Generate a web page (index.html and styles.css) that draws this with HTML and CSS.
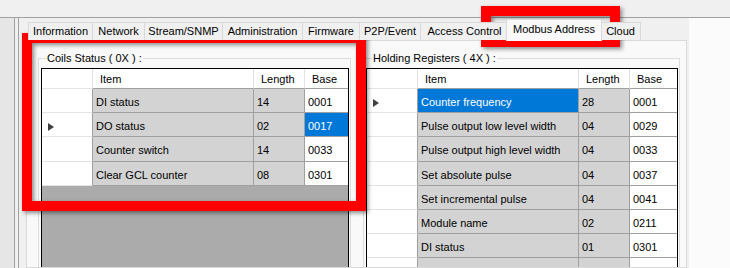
FILE: index.html
```html
<!DOCTYPE html>
<html>
<head>
<meta charset="utf-8">
<link rel="stylesheet" href="styles.css">
</head>
<body>
<div class="topbar"></div>
<div class="main">
  <div class="side"></div>
  <div class="gap"></div>
  <div class="tabctl">
    <div class="tabs">
      <div class="tab w-info">Information</div>
      <div class="tab w-net">Network</div>
      <div class="tab w-snmp">Stream/SNMP</div>
      <div class="tab w-admin">Administration</div>
      <div class="tab w-fw">Firmware</div>
      <div class="tab w-p2p">P2P/Event</div>
      <div class="tab w-acc">Access Control</div>
      <div class="tab sel w-mod">Modbus Address</div>
      <div class="tab last w-cloud">Cloud</div>
    </div>
    <div class="page">
      <fieldset class="group g-left">
        <legend class="lg-left">Coils Status ( 0X ) :</legend>
        <div class="grid grid-left">
          <div class="row head">
            <div class="c rh"></div><div class="c item">Item</div><div class="c len">Length</div><div class="c base">Base</div>
          </div>
          <div class="row">
            <div class="c rh"></div><div class="c item">DI status</div><div class="c len">14</div><div class="c base">0001</div>
          </div>
          <div class="row">
            <div class="c rh"><span class="arrow"></span></div><div class="c item">DO status</div><div class="c len">02</div><div class="c base selcell">0017</div>
          </div>
          <div class="row">
            <div class="c rh"></div><div class="c item">Counter switch</div><div class="c len">14</div><div class="c base">0033</div>
          </div>
          <div class="row">
            <div class="c rh"></div><div class="c item">Clear GCL counter</div><div class="c len">08</div><div class="c base">0301</div>
          </div>
        </div>
      </fieldset>
      <fieldset class="group g-right">
        <legend class="lg-right">Holding Registers ( 4X ) :</legend>
        <div class="grid grid-right">
          <div class="row head">
            <div class="c rh"></div><div class="c item">Item</div><div class="c len">Length</div><div class="c base">Base</div>
          </div>
          <div class="row">
            <div class="c rh"><span class="arrow"></span></div><div class="c item selcell">Counter frequency</div><div class="c len">28</div><div class="c base">0001</div>
          </div>
          <div class="row">
            <div class="c rh"></div><div class="c item">Pulse output low level width</div><div class="c len">04</div><div class="c base">0029</div>
          </div>
          <div class="row">
            <div class="c rh"></div><div class="c item">Pulse output high level width</div><div class="c len">04</div><div class="c base">0033</div>
          </div>
          <div class="row">
            <div class="c rh"></div><div class="c item">Set absolute pulse</div><div class="c len">04</div><div class="c base">0037</div>
          </div>
          <div class="row">
            <div class="c rh"></div><div class="c item">Set incremental pulse</div><div class="c len">04</div><div class="c base">0041</div>
          </div>
          <div class="row">
            <div class="c rh"></div><div class="c item">Module name</div><div class="c len">02</div><div class="c base">0211</div>
          </div>
          <div class="row">
            <div class="c rh"></div><div class="c item">DI status</div><div class="c len">01</div><div class="c base">0301</div>
          </div>
          <div class="row">
            <div class="c rh"></div><div class="c item">DO status</div><div class="c len">01</div><div class="c base">0302</div>
          </div>
        </div>
      </fieldset>
    </div>
  </div>
  <div class="rest"></div>
</div>
<div class="mark m1"></div>
<div class="mark m2"></div>
</body>
</html>
```
FILE: styles.css
```css
html, body {
  margin: 0;
  height: 268px;
  overflow: hidden;
}
body {
  position: relative;
  background: #f0f0f0;
  font: 11px "Liberation Sans", Arial, sans-serif;
  color: #000;
}
.topbar {
  height: 17px;
}
.main {
  display: flex;
  border-top: 1px solid #a0a0a0;
  height: 250px;
}
.side {
  width: 14px;
  background: #e6e6e6;
  border-right: 1px solid #a0a0a0;
}
.gap {
  width: 3px;
}
.tabctl {
  box-sizing: border-box;
  width: 671px;
  border-left: 1px solid #a0a0a0;
  padding: 0 2px 0 7px;
  display: flex;
  flex-direction: column;
}
.rest {
  flex: 1;
  background: #fbfbfb;
}
.tabs {
  height: 22px;
  display: flex;
  align-items: flex-end;
  padding-left: 2px;
  position: relative;
  z-index: 1;
}
.tab {
  box-sizing: border-box;
  height: 18px;
  line-height: 17px;
  text-align: center;
  white-space: nowrap;
  border-top: 1px solid #d9d9d9;
  border-left: 1px solid #d9d9d9;
  background: #f0f0f0;
}
.tab.last {
  border-right: 1px solid #d9d9d9;
}
.tab.sel {
  position: relative;
  z-index: 2;
  height: 22px;
  line-height: 18px;
  margin: 0 -2px -1px -2px;
  border-right: 1px solid #d9d9d9;
  background: #f9f9f9;
}
.w-info { width: 64px; }
.w-net { width: 52px; }
.w-snmp { width: 78px; }
.w-admin { width: 80px; }
.w-fw { width: 57px; }
.w-p2p { width: 61px; }
.w-acc { width: 88px; }
.w-mod { width: 96px; }
.w-cloud { width: 41px; }

.page {
  flex: 1;
  min-height: 0;
  border: 1px solid #d9d9d9;
  background: #f9f9f9;
  display: flex;
  align-items: flex-start;
  overflow: hidden;
}
.group {
  box-sizing: border-box;
  margin: 11px 0 0 0;
  padding: 3px 1px 0 2px;
  border: 1px solid #dcdcdc;
  min-width: 0;
}
.group legend {
  padding: 0 1px;
  line-height: 13px;
  height: 13px;
}
.g-left {
  width: 313px;
  margin-left: 11px;
}
.g-right {
  width: 317px;
  margin-left: 12px;
}
.lg-left { margin-left: 5px; }
.lg-right { margin-left: 6px; }

.grid {
  box-sizing: border-box;
  border: 1px solid #000;
  background: #ababab;
  height: 230px;
}
.grid-left { width: 308px; }
.grid-right { width: 312px; }
.row {
  display: flex;
  height: 24.2px;
}
.row.head {
  height: 20px;
}
.c {
  box-sizing: border-box;
  border-right: 1px solid #a0a0a0;
  border-bottom: 1px solid #a0a0a0;
  padding: 1px 0 0 3px;
  line-height: 24px;
  white-space: nowrap;
}
.rh {
  width: 51px;
  background: #fff;
  border-bottom-color: #e3e3e3;
  padding: 0;
}
.item {
  width: 161px;
  background: #d3d3d3;
}
.len {
  width: 51px;
  background: #d3d3d3;
}
.base {
  background: #fff;
  border-right: 0;
}
.grid-left .base { width: 43px; }
.grid-right .base { width: 47px; }
.head .c {
  background: #fff;
  border-right-color: #e3e3e3;
  padding: 0 0 0 7px;
  line-height: 20px;
}
.head .rh {
  padding: 0;
}
.selcell {
  background: #0078d7;
  color: #fff;
}
.arrow {
  display: block;
  width: 0;
  height: 0;
  margin: 10px 0 0 6px;
  border-left: 6px solid #404040;
  border-top: 4px solid transparent;
  border-bottom: 4px solid transparent;
}
.mark {
  position: absolute;
  box-sizing: border-box;
  border: 10px solid #ff0000;
  filter: drop-shadow(2px 2px 2px rgba(0, 0, 0, 0.45));
}
.m1 {
  left: 22px;
  top: 33px;
  width: 344px;
  height: 178px;
}
.m2 {
  left: 481px;
  top: 6px;
  width: 139px;
  height: 41px;
}
```
